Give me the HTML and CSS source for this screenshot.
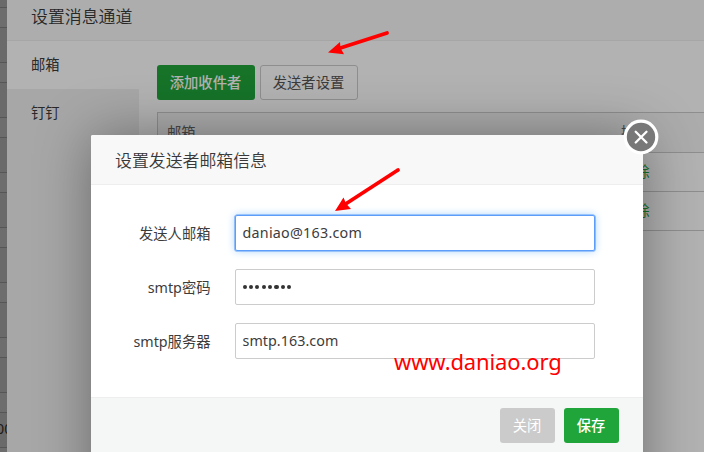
FILE: index.html
```
<!DOCTYPE html>
<html lang="zh-CN">
<head>
<meta charset="utf-8">
<title>设置消息通道</title>
<link rel="stylesheet" href="styles.css">
</head>
<body>
<div class="screen">
  <div class="backdrop"><span class="peek">00</span></div>
  <section class="panel">
    <h1 class="title">设置消息通道</h1>
    <div class="panel-body">
      <nav class="tabs">
        <a class="tab active">邮箱</a>
        <a class="tab">钉钉</a>
      </nav>
      <div class="content">
        <div class="actions">
          <button class="btn primary">添加收件者</button>
          <button class="btn outline">发送者设置</button>
        </div>
        <div class="table">
          <div class="row head"><span>邮箱</span><span>操作</span></div>
          <div class="row"><span></span><a>删除</a></div>
          <div class="row"><span></span><a>删除</a></div>
        </div>
      </div>
    </div>
  </section>
  <div class="shade"></div>
  <section class="modal">
    <h2 class="title">设置发送者邮箱信息</h2>
    <div class="form">
      <div class="line"><span class="label">发送人邮箱</span><div class="field focus"><span class="mail">daniao@163.com</span></div></div>
      <div class="line"><span class="label">smtp密码</span><div class="field"><span class="dots"><i></i><i></i><i></i><i></i><i></i><i></i><i></i><i></i></span></div></div>
      <div class="line"><span class="label">smtp服务器</span><div class="field"><span class="server">smtp.163.com</span></div></div>
    </div>
    <div class="footer">
      <button class="btn muted">关闭</button>
      <button class="btn primary">保存</button>
    </div>
    <svg class="close" viewBox="0 0 36 36"><circle cx="18" cy="18" r="15.8" fill="#787878" stroke="#fff" stroke-width="3.2"/><path d="M12.7 12.7l10.8 10.8M23.5 12.7l-10.8 10.8" stroke="#fff" stroke-width="2.3" stroke-linecap="round"/></svg>
  </section>
  <svg class="arrows" viewBox="0 0 704 452" fill="#f00" stroke="#f00">
    <path d="M387 33L338 48.7" stroke-width="3.8" stroke-linecap="round"/>
    <path d="M328 52.5L340 42L340.5 48L344 54.3Z" stroke="none"/>
    <path d="M398 170L344 205" stroke-width="3.8" stroke-linecap="round"/>
    <path d="M335 211L343.5 197.5L346 203.5L351 209Z" stroke="none"/>
  </svg>
  <span class="watermark">www.daniao.org</span>
</div>
</body>
</html>
```
FILE: styles.css
```
* { box-sizing: border-box; }
body { margin: 0; font: 400 14.3px/20px "Noto Sans", "Noto Sans CJK SC", sans-serif; color: #3c3c3c; }
.screen { position: relative; width: 704px; height: 452px; overflow: hidden; }
.backdrop {
  position: absolute; inset: 0; overflow: hidden;
  background: repeating-linear-gradient(#999 0 7px, #7c7c7c 7px 8px, #9d9d9d 8px 27px, #7c7c7c 27px 28px, #999 28px 55px);
}
.peek { position: absolute; left: -4px; top: 419px; color: #302820; }
.panel { position: absolute; left: 7px; top: -9px; width: 720px; height: 480px; background: #fff; display: flex; flex-direction: column; }
.title { margin: 0; height: 50px; flex: none; padding-left: 24px; background: #f8f8f8; border-bottom: 1px solid #eee; font-size: 16.9px; font-weight: 350; line-height: 52px; color: #383838; }
.panel-body { flex: 1; display: flex; }
.tabs { width: 132px; background: #f0f0f1; }
.tab { display: block; height: 48px; line-height: 48px; padding-left: 24px; }
.active { background: #fff; }
.content { flex: 1; padding: 24px 0 0 18px; }
.actions { display: flex; gap: 5px; }
.btn { height: 35px; padding: 0; border: 0; border-radius: 3px; font: inherit; color: #fff; }
.actions .btn { width: 98px; padding-right: 1px; }
.primary { background: #20a53a; font-weight: 500; }
.btn.outline { background: #fff; border: 1px solid #ccc; color: #555; }
.muted { background: #cbcbcb; }
.table { margin-top: 12px; border: 1px solid #ccc; border-bottom: 0; }
.row { height: 39px; display: grid; grid-template-columns: 454px 1fr; align-items: center; padding-left: 9px; border-bottom: 1px solid #ccc; }
.row a { color: #20a53a; }
.head { height: 40px; background: #f6f6f6; color: #666; }
.shade { position: absolute; inset: 0; background: rgba(0, 0, 0, .3); }
.modal { position: absolute; left: 91px; top: 135px; width: 552px; height: 390px; display: flex; flex-direction: column; background: #fff; border-radius: 2px 2px 0 0; box-shadow: 1px 1px 55px rgba(0, 0, 0, .38); }
.modal > .title { border-radius: 2px 2px 0 0; line-height: 51px; }
.form { height: 212px; display: flex; flex-direction: column; gap: 18px; padding-top: 30px; }
.line { display: flex; height: 36px; align-items: center; }
.label { width: 119.5px; margin-right: 24.5px; text-align: right; padding-top: 2px; }
.field { width: 360px; height: 36px; display: flex; align-items: center; padding: 0 6.5px; border: 1px solid #ccc; border-radius: 2px; }
.field.focus { border-color: #5c9dfa; box-shadow: 0 0 0 .6px #5c9dfa, 0 0 9px #a5d1f8; }
.mail { letter-spacing: .25px; }
.server { letter-spacing: .05px; }
.dots { display: flex; gap: 2.3px; }
.dots i { width: 4.1px; height: 4.1px; border-radius: 50%; background: #333; }
.footer { flex: 1; display: flex; justify-content: flex-end; align-items: flex-start; gap: 9px; padding: 10px 24px; background: #f5f7f7; border-top: 1px solid #eee; }
.footer .btn { width: 55px; padding-right: 1px; }
.close { position: absolute; left: 532px; top: -16px; width: 36px; height: 36px; }
.arrows { position: absolute; inset: 0; width: 704px; height: 452px; }
.watermark { position: absolute; left: 394px; top: 346px; font-size: 22px; letter-spacing: -.12px; line-height: 30px; color: #f00; }
```
